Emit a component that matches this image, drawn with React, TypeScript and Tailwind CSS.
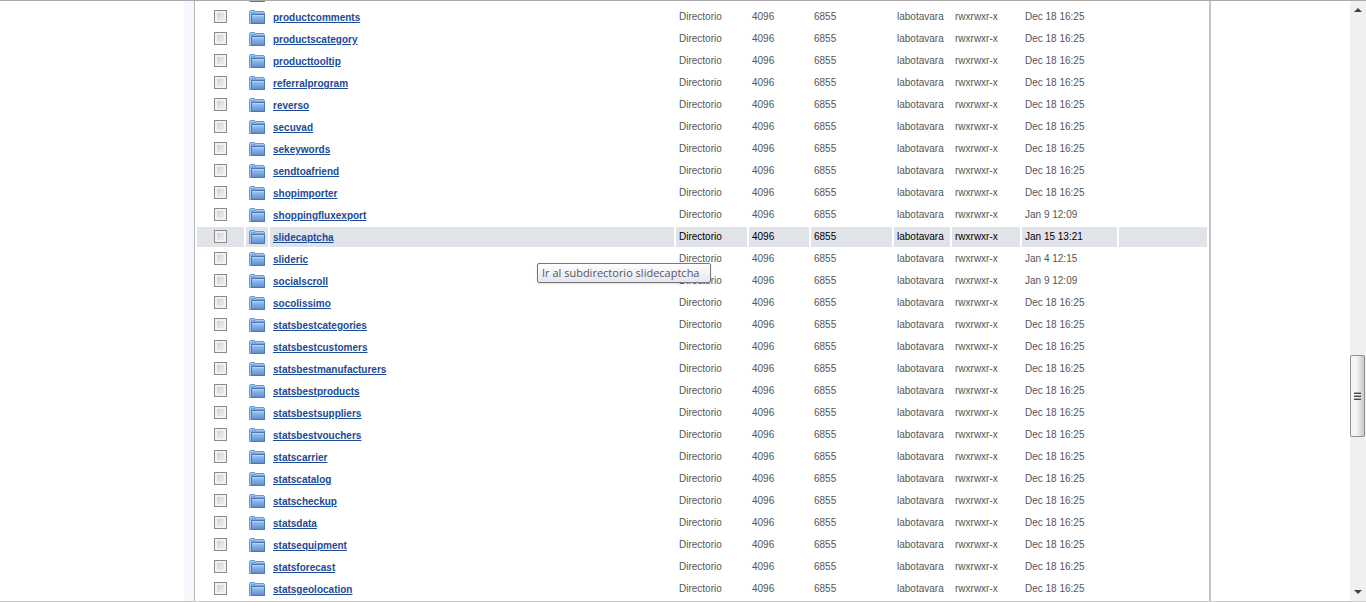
import clsx from "clsx";

type Entry = {
  name: string;
  date?: string;
  hovered?: boolean;
};

const entries: Entry[] = [
  { name: "productcomments" },
  { name: "productscategory" },
  { name: "producttooltip" },
  { name: "referralprogram" },
  { name: "reverso" },
  { name: "secuvad" },
  { name: "sekeywords" },
  { name: "sendtoafriend" },
  { name: "shopimporter" },
  { name: "shoppingfluxexport", date: "Jan 9 12:09" },
  { name: "slidecaptcha", date: "Jan 15 13:21", hovered: true },
  { name: "slideric", date: "Jan 4 12:15" },
  { name: "socialscroll", date: "Jan 9 12:09" },
  { name: "socolissimo" },
  { name: "statsbestcategories" },
  { name: "statsbestcustomers" },
  { name: "statsbestmanufacturers" },
  { name: "statsbestproducts" },
  { name: "statsbestsuppliers" },
  { name: "statsbestvouchers" },
  { name: "statscarrier" },
  { name: "statscatalog" },
  { name: "statscheckup" },
  { name: "statsdata" },
  { name: "statsequipment" },
  { name: "statsforecast" },
  { name: "statsgeolocation" },
];

const FolderIcon = () => (
  <svg width="16" height="16" viewBox="0 0 16 16" className="block" aria-hidden="true">
    <defs>
      <linearGradient id="folder" x1="0" y1="0" x2="0" y2="1">
        <stop offset="0" stopColor="#a6c8ef" />
        <stop offset="1" stopColor="#5b8bd0" />
      </linearGradient>
    </defs>
    <path d="M.5 14.500V2.500l1-1h4l1 1h8l1 1v11z" fill="#7ba6dc" stroke="#6d96cc" />
    <path d="M1.500 2.500h4M1.500 3v11M6.500 3.500h8" stroke="#a9caf0" />
    <path d="M2.500 14.500v-9h13v9z" fill="url(#folder)" stroke="#4a77b9" />
    <path d="M3 6.500h12" stroke="#b7d3f4" />
  </svg>
);

const FileRow = ({ name, date = "Dec 18 16:25", hovered }: Entry) => {
  const cell = clsx("h-5 p-0 pl-[3px]", hovered && "bg-[#e0e4e9]");

  return (
    <tr className={hovered ? "text-black" : "text-[#555555]"}>
      <td className={clsx("h-5 p-0 pb-px", hovered && "bg-[#e0e4e9]")}>
        <input
          type="checkbox"
          aria-label={name}
          className="mx-auto block size-[13px] appearance-none border border-[#8b8b8b] bg-linear-to-br from-[#c3c7cc] to-[#fafafa] shadow-[inset_0_0_0_2px_#f2f2f2]"
        />
      </td>
      <td className={cell}>
        <FolderIcon />
      </td>
      <td className={clsx(cell, "pt-[2px]")}>
        <a href="#" className="block w-fit font-bold text-[#1b4a97] underline">
          {name}
        </a>
      </td>
      <td className={cell}>Directorio</td>
      <td className={cell}>4096</td>
      <td className={cell}>6855</td>
      <td className={cell}>labotavara</td>
      <td className={cell}>rwxrwxr-x</td>
      <td className={cell}>{date}</td>
      <td className={cell}></td>
    </tr>
  );
};

const FileTable = () => (
  <table className="-mt-[18px] w-full table-fixed border-separate border-spacing-[2px] text-[10px] leading-3">
    <colgroup>
      <col className="w-[47px]" />
      <col className="w-[22px]" />
      <col />
      <col className="w-[71px]" />
      <col className="w-[60px]" />
      <col className="w-[81px]" />
      <col className="w-[56px]" />
      <col className="w-[68px]" />
      <col className="w-[95px]" />
      <col className="w-[88px]" />
    </colgroup>
    <tbody>
      {/* row scrolled out of view, only the foot of its folder still shows */}
      <tr>
        <td className="h-5 p-0" />
        <td className="h-5 p-0 pl-[3px]">
          <FolderIcon />
        </td>
        <td colSpan={8} className="p-0" />
      </tr>
      {entries.map((entry) => (
        <FileRow key={entry.name} {...entry} />
      ))}
    </tbody>
  </table>
);

const Scrollbar = () => (
  <div className="flex w-4 shrink-0 flex-col bg-[#f0f0f0]">
    <svg width="8" height="4" viewBox="0 0 8 4" className="mx-auto mt-[7px]" aria-hidden="true">
      <path d="M0 4l4-4 4 4z" fill="#404040" />
    </svg>
    <div className="grow-[342]" />
    <div className="flex h-[82px] w-[15px] items-center justify-center rounded-xs border border-[#8f8f93] bg-linear-to-r from-[#f5f5f5] from-40% to-[#c9c9ce]">
      <svg width="8" height="8" viewBox="0 0 8 8" aria-hidden="true">
        <path d="M0 1.500h7M0 4.500h7M0 7.500h7" stroke="#4a4a4a" />
        <path d="M0 .5h7M0 3.500h7M0 6.500h7" stroke="#a5a5a5" />
      </svg>
    </div>
    <div className="grow-[153]" />
    <svg width="8" height="4" viewBox="0 0 8 4" className="mx-auto mb-[7px]" aria-hidden="true">
      <path d="M0 0l4 4 4-4z" fill="#404040" />
    </svg>
  </div>
);

const App = () => (
  <div className="flex h-screen overflow-hidden border-t border-b border-t-[#aaaaaa] border-b-[#c8c8c8] bg-white font-['Liberation_Sans',Arial,sans-serif]">
    <div className="w-[195px] shrink-0 border-r border-[#b5b5b5]">
      <div className="ml-auto h-full w-[10px] bg-[#f6f6fd]" />
    </div>
    <main className="relative min-w-0 flex-1 border-r-2 border-[#c3c3c6]">
      <FileTable />
      <div
        role="tooltip"
        className="absolute top-[262px] left-[342px] flex h-5 w-[174px] items-center rounded-xs border border-[#767676] bg-linear-to-b from-white to-[#e4e5f0] pl-1 font-['Open_Sans',sans-serif] text-[11px] whitespace-nowrap text-[#575757] shadow-sm"
      >
        Ir al subdirectorio slidecaptcha
      </div>
    </main>
    <div className="w-[139px] shrink-0" />
    <Scrollbar />
  </div>
);

export default App;
